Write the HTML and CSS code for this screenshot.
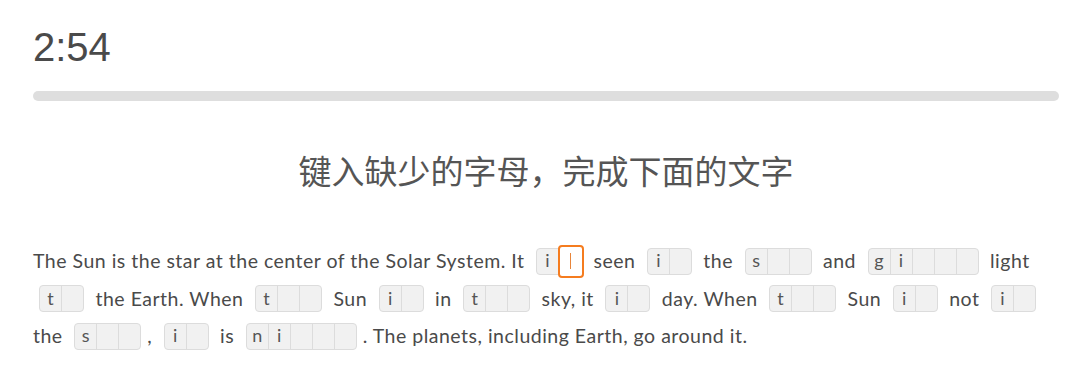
FILE: index.html
```html
<!DOCTYPE html>
<html lang="zh">
<head>
<meta charset="utf-8">
<link rel="stylesheet" href="styles.css">
</head>
<body>
<div class="page">
  <div class="timer">2:54</div>
  <div class="progress"><div class="progress-fill"></div></div>
  <h1 class="title">键入缺少的字母，完成下面的文字</h1>
  <p class="passage">The Sun is the star at the center of the Solar System. It <span class="word"><span class="cell">i</span><span class="cell active"><span class="cursor"></span></span></span> seen <span class="word"><span class="cell">i</span><span class="cell"></span></span> the <span class="word"><span class="cell">s</span><span class="cell"></span><span class="cell"></span></span> and <span class="word"><span class="cell">g</span><span class="cell">i</span><span class="cell"></span><span class="cell"></span><span class="cell"></span></span> light <span class="word"><span class="cell">t</span><span class="cell"></span></span> the Earth. When <span class="word"><span class="cell">t</span><span class="cell"></span><span class="cell"></span></span> Sun <span class="word"><span class="cell">i</span><span class="cell"></span></span> in <span class="word"><span class="cell">t</span><span class="cell"></span><span class="cell"></span></span> sky, it <span class="word"><span class="cell">i</span><span class="cell"></span></span> day. When <span class="word"><span class="cell">t</span><span class="cell"></span><span class="cell"></span></span> Sun <span class="word"><span class="cell">i</span><span class="cell"></span></span> not <span class="word"><span class="cell">i</span><span class="cell"></span></span> the <span class="word"><span class="cell">s</span><span class="cell"></span><span class="cell"></span></span>, <span class="word"><span class="cell">i</span><span class="cell"></span></span> is <span class="word"><span class="cell">n</span><span class="cell">i</span><span class="cell"></span><span class="cell"></span><span class="cell"></span></span>. The planets, including Earth, go around it.</p>
</div>
</body>
</html>
```
FILE: styles.css
```css
html, body {
  margin: 0;
  padding: 0;
  background: #ffffff;
}
.page {
  padding: 24px 21px 0 33px;
}
.timer {
  font-family: "Liberation Sans", Arial, sans-serif;
  font-size: 40px;
  line-height: 46px;
  color: #4a4a4a;
}
.progress {
  margin-top: 21px;
  height: 10px;
  border-radius: 5px;
  background: #dedede;
}
.progress-fill {
  width: 0;
  height: 100%;
}
.title {
  margin: 47px 0 0 0;
  text-align: center;
  font-family: "Noto Sans CJK SC", "Noto Sans", sans-serif;
  font-weight: 400;
  font-size: 33px;
  line-height: 44px;
  color: #555555;
}
.passage {
  margin: 50px 0 0 0;
  font-family: Lato, "Noto Sans", sans-serif;
  font-size: 19.5px;
  letter-spacing: 0.5px;
  line-height: 37.5px;
  color: #4a4a4a;
}
.word {
  display: inline-flex;
  vertical-align: middle;
  margin: 0 6px;
  border: 1px solid #dcdcdc;
  border-radius: 4px;
  background: #f1f1f1;
  position: relative;
  top: -2px;
  letter-spacing: 0;
}
.cell {
  width: 21px;
  height: 25px;
  display: flex;
  align-items: center;
  justify-content: center;
  font-size: 18px;
  color: #555555;
  border-left: 1px solid #dcdcdc;
  position: relative;
}
.cell:first-child {
  border-left: none;
}
.cell.active {
  border: 2px solid #f57c1f;
  border-radius: 4px;
  margin: -4px -3px -4px 0;
  height: 29px;
  width: 22px;
  background: #ffffff;
}
.cursor {
  width: 1px;
  height: 16px;
  background: #e8853a;
}
```
